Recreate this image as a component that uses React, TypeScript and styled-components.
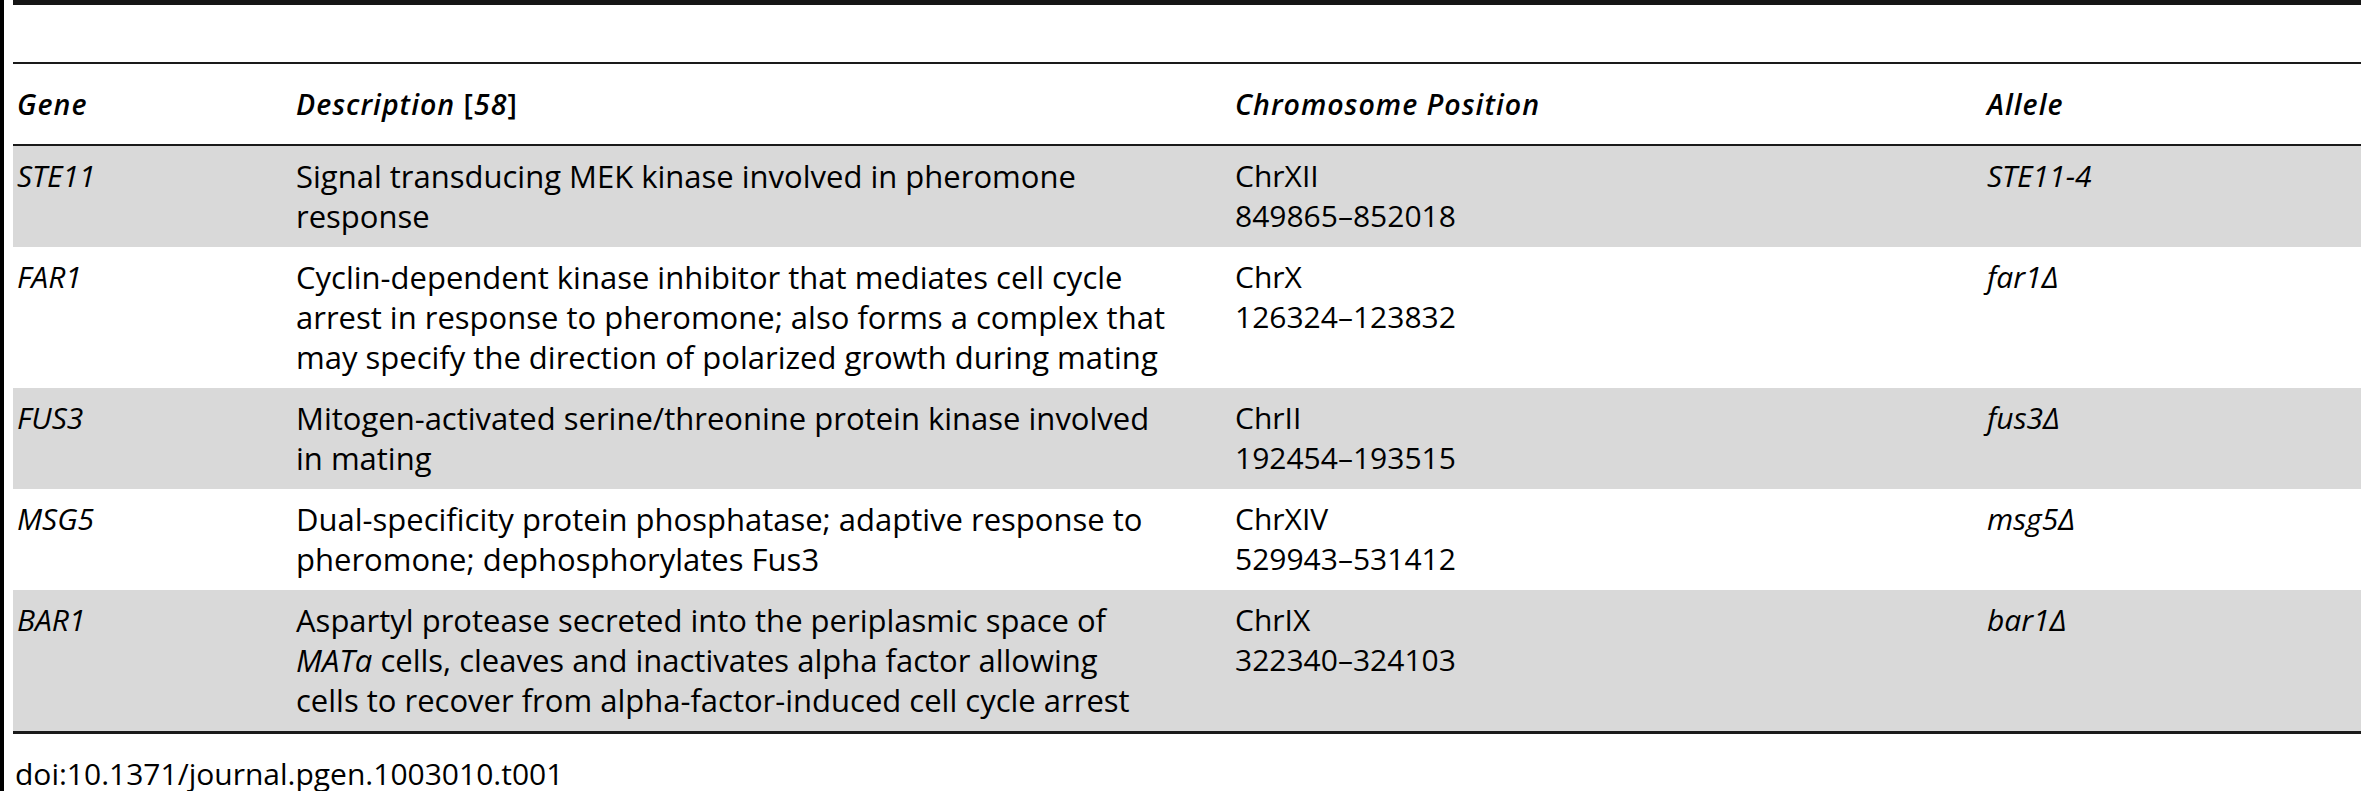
import React from "react";
import styled, { createGlobalStyle } from "styled-components";

const Global = createGlobalStyle`
  html, body { margin: 0; padding: 0; background: #ffffff; }
  body { font-family: "Open Sans", "Noto Sans", "Liberation Sans", sans-serif; color: #000; }
`;

const Page = styled.div`
  display: flex;
  flex-direction: row;
  align-items: stretch;
  gap: 9px;
  width: 2361px;
`;

const LeftBar = styled.div`
  width: 4px;
  background: #000;
  flex: 0 0 4px;
`;

const Content = styled.div`
  flex: 1;
  display: flex;
  flex-direction: column;
`;

const TopRule = styled.div`
  height: 5px;
  background: #151515;
`;

const TitleSpace = styled.div`
  height: 57px;
`;

const Rule = styled.div<{ $h: number }>`
  height: ${(p) => p.$h}px;
  background: #1a1a1a;
`;

const cols = "279px 939px 752px 1fr";

const HeadRow = styled.div`
  display: grid;
  grid-template-columns: ${cols};
  height: 80px;
  align-items: center;
`;

const HeadCell = styled.div`
  padding-left: 4px;
  font-size: 28.5px;
  letter-spacing: 1px;
  line-height: 40px;
  font-weight: 600;
  font-style: italic;
  white-space: nowrap;
`;

const Upright = styled.span`
  font-style: normal;
`;

const Row = styled.div<{ $shaded?: boolean }>`
  display: grid;
  grid-template-columns: ${cols};
  background: ${(p) => (p.$shaded ? "#d9d9d9" : "#ffffff")};
  padding: 10px 0 11px;
  align-items: start;
`;

const Cell = styled.div<{ $italic?: boolean; $size?: number }>`
  padding-left: 4px;
  font-size: ${(p) => p.$size ?? 30}px;
  line-height: 40px;
  font-style: ${(p) => (p.$italic ? "italic" : "normal")};
  white-space: nowrap;
`;

const Line = styled.div``;

const Em = styled.i``;

const Doi = styled.div`
  margin-top: 23px;
  padding-left: 2px;
  font-size: 30px;
  line-height: 34px;
`;

type RowData = {
  gene: string;
  desc: React.ReactNode[];
  chr: string;
  pos: string;
  allele: string;
};

const rows: RowData[] = [
  {
    gene: "STE11",
    desc: ["Signal transducing MEK kinase involved in pheromone", "response"],
    chr: "ChrXII",
    pos: "849865–852018",
    allele: "STE11-4",
  },
  {
    gene: "FAR1",
    desc: [
      "Cyclin-dependent kinase inhibitor that mediates cell cycle",
      "arrest in response to pheromone; also forms a complex that",
      "may specify the direction of polarized growth during mating",
    ],
    chr: "ChrX",
    pos: "126324–123832",
    allele: "far1Δ",
  },
  {
    gene: "FUS3",
    desc: ["Mitogen-activated serine/threonine protein kinase involved", "in mating"],
    chr: "ChrII",
    pos: "192454–193515",
    allele: "fus3Δ",
  },
  {
    gene: "MSG5",
    desc: ["Dual-specificity protein phosphatase; adaptive response to", "pheromone; dephosphorylates Fus3"],
    chr: "ChrXIV",
    pos: "529943–531412",
    allele: "msg5Δ",
  },
  {
    gene: "BAR1",
    desc: [
      "Aspartyl protease secreted into the periplasmic space of",
      <>
        <Em>MATa</Em> cells, cleaves and inactivates alpha factor allowing
      </>,
      "cells to recover from alpha-factor-induced cell cycle arrest",
    ],
    chr: "ChrIX",
    pos: "322340–324103",
    allele: "bar1Δ",
  },
];

export default function App() {
  return (
    <>
      <Global />
      <Page>
        <LeftBar />
        <Content>
          <TopRule />
          <TitleSpace />
          <Rule $h={2} />
          <HeadRow>
            <HeadCell>Gene</HeadCell>
            <HeadCell>
              Description <Upright>[</Upright>58<Upright>]</Upright>
            </HeadCell>
            <HeadCell>Chromosome Position</HeadCell>
            <HeadCell>Allele</HeadCell>
          </HeadRow>
          <Rule $h={2} />
          {rows.map((r, i) => (
            <Row key={r.gene} $shaded={i % 2 === 0}>
              <Cell $italic>{r.gene}</Cell>
              <Cell $size={31}>
                {r.desc.map((d, j) => (
                  <Line key={j}>{d}</Line>
                ))}
              </Cell>
              <Cell>
                <Line>{r.chr}</Line>
                <Line>{r.pos}</Line>
              </Cell>
              <Cell $italic>{r.allele}</Cell>
            </Row>
          ))}
          <Rule $h={3} />
          <Doi>doi:10.1371/journal.pgen.1003010.t001</Doi>
        </Content>
      </Page>
    </>
  );
}
